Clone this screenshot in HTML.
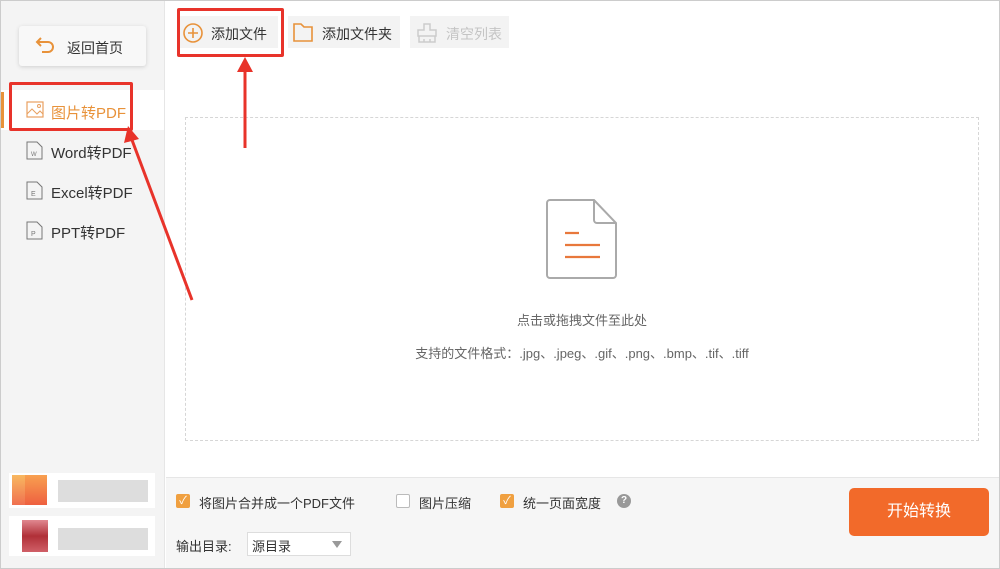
<!DOCTYPE html>
<html><head><meta charset="utf-8"><style>
*{margin:0;padding:0;box-sizing:border-box}
body{width:1000px;height:569px;position:relative;overflow:hidden;background:#fff;font-family:"Liberation Sans","Noto Sans CJK SC",sans-serif;font-size:14px;color:#333}
.abs{position:absolute}
</style></head><body>
<div class="abs" style="left:0;top:0;width:1000px;height:569px;border:1px solid #ccc"></div>
<div class="abs" style="left:1px;top:1px;width:164px;height:567px;background:#f4f4f4;border-right:1px solid #e6e6e6"></div>
<div class="abs" style="left:19px;top:26px;width:127px;height:40px;background:#f8f8f8;border-radius:3px;box-shadow:0 1px 4px rgba(0,0,0,.15)"></div>
<svg class="abs" style="left:35px;top:36px" width="22" height="20" viewBox="0 0 22 20"><path d="M6 2 L2 6 L6 10 M2 6 H13 a5 5 0 0 1 0 10 H7" fill="none" stroke="#e8923a" stroke-width="2"/></svg>
<div class="abs" style="left:67px;top:38px;font-size:14px">返回首页</div>
<div class="abs" style="left:1px;top:90px;width:163px;height:40px;background:#fff"></div>
<div class="abs" style="left:1px;top:92px;width:3px;height:36px;background:#e8923a"></div>
<svg class="abs" style="left:26px;top:101px" width="18" height="17"><rect x="1" y="1" width="16" height="15" fill="none" stroke="#e8a060" stroke-width="1.2"/><path d="M1 13 L6 8 L11 13 L14 10 L17 13" fill="none" stroke="#e8a060"/><circle cx="13" cy="5" r="1.5" fill="none" stroke="#e8a060"/></svg>
<div class="abs" style="left:51px;top:102px;color:#e8923a;font-size:15px">图片转PDF</div>
<svg class="abs" style="left:26px;top:141px" width="17" height="19"><path d="M1 1 H11 L16 6 V18 H1 Z" fill="none" stroke="#777"/><text x="5" y="15" font-size="6" fill="#777">W</text></svg>
<div class="abs" style="left:51px;top:142px;font-size:15px">Word转PDF</div>
<svg class="abs" style="left:26px;top:181px" width="17" height="19"><path d="M1 1 H11 L16 6 V18 H1 Z" fill="none" stroke="#777"/><text x="5" y="15" font-size="7" fill="#777">E</text></svg>
<div class="abs" style="left:51px;top:182px;font-size:15px">Excel转PDF</div>
<svg class="abs" style="left:26px;top:221px" width="17" height="19"><path d="M1 1 H11 L16 6 V18 H1 Z" fill="none" stroke="#777"/><text x="5" y="15" font-size="7" fill="#777">P</text></svg>
<div class="abs" style="left:51px;top:222px;font-size:15px">PPT转PDF</div>
<!-- blurred -->
<div class="abs" style="left:9px;top:473px;width:146px;height:35px;background:#fff"></div>
<div class="abs" style="left:12px;top:475px;width:13px;height:30px;background:linear-gradient(#f8b860,#f07050)"></div>
<div class="abs" style="left:25px;top:475px;width:22px;height:30px;background:linear-gradient(#f8a050,#ee6040)"></div>
<div class="abs" style="left:58px;top:480px;width:90px;height:22px;background:#ddd"></div>
<div class="abs" style="left:9px;top:516px;width:146px;height:40px;background:#fff"></div>
<div class="abs" style="left:22px;top:520px;width:26px;height:32px;background:linear-gradient(#e08890,#b03038,#d06068)"></div>
<div class="abs" style="left:58px;top:528px;width:90px;height:22px;background:#ddd"></div>
<!-- toolbar -->
<div class="abs" style="left:180px;top:16px;width:98px;height:32px;background:#f3f3f3"></div>
<svg class="abs" style="left:182px;top:22px" width="22" height="22"><circle cx="11" cy="11" r="9" fill="none" stroke="#e8923a" stroke-width="1.6"/><path d="M11 6V16M6 11H16" stroke="#e8923a" stroke-width="1.6"/></svg>
<div class="abs" style="left:211px;top:24px">添加文件</div>
<div class="abs" style="left:288px;top:16px;width:112px;height:32px;background:#f3f3f3"></div>
<svg class="abs" style="left:292px;top:21px" width="22" height="22"><path d="M2 3 H9 L12 6 H20 V20 H2 Z" fill="none" stroke="#e8923a" stroke-width="1.6"/></svg>
<div class="abs" style="left:322px;top:24px">添加文件夹</div>
<div class="abs" style="left:410px;top:16px;width:99px;height:32px;background:#f3f3f3"></div>
<svg class="abs" style="left:416px;top:22px" width="22" height="22"><path d="M8 2H14V8H20V14H2V8H8Z M3 14V20H19V14 M8 17V20 M14 17V20" fill="none" stroke="#ccc" stroke-width="1.5"/></svg>
<div class="abs" style="left:446px;top:24px;color:#c4c4c4">清空列表</div>
<!-- drop zone -->
<div class="abs" style="left:185px;top:117px;width:794px;height:324px;border:1px dashed #d6d6d6"></div>
<svg class="abs" style="left:545px;top:198px" width="74" height="82"><path d="M5 2 H49 L71 25 V77 a3 3 0 0 1 -3 3 H5 a3 3 0 0 1 -3 -3 V5 a3 3 0 0 1 3 -3Z M49 2 V22 a3 3 0 0 0 3 3 H71" fill="none" stroke="#aaa" stroke-width="2"/><path d="M20 35H34M20 47H55M20 59H55" stroke="#e8783c" stroke-width="2.2"/></svg>
<div class="abs" style="left:0;top:310px;width:1164px;text-align:center;font-size:13px;color:#666">点击或拖拽文件至此处</div>
<div class="abs" style="left:0;top:343px;width:1164px;text-align:center;font-size:13px;color:#666">支持的文件格式：.jpg、.jpeg、.gif、.png、.bmp、.tif、.tiff</div>
<!-- bottom -->
<div class="abs" style="left:166px;top:477px;width:833px;height:91px;background:#f6f6f6;border-top:1px solid #e6e6e6"></div>
<div class="abs" style="left:176px;top:494px;width:14px;height:14px;background:#f0a040;border-radius:2px;color:#fff;font-size:11px;text-align:center;line-height:14px">✓</div>
<div class="abs" style="left:199px;top:493px;font-size:13px">将图片合并成一个PDF文件</div>
<div class="abs" style="left:396px;top:494px;width:14px;height:14px;background:#fff;border:1px solid #bbb;border-radius:2px"></div>
<div class="abs" style="left:419px;top:493px;font-size:13px">图片压缩</div>
<div class="abs" style="left:500px;top:494px;width:14px;height:14px;background:#f0a040;border-radius:2px;color:#fff;font-size:11px;text-align:center;line-height:14px">✓</div>
<div class="abs" style="left:523px;top:493px;font-size:13px">统一页面宽度</div>
<div class="abs" style="left:617px;top:494px;width:14px;height:14px;background:#999;border-radius:50%;color:#fff;font-size:10px;text-align:center;line-height:14px;font-weight:bold">?</div>
<div class="abs" style="left:176px;top:536px;font-size:13px">输出目录:</div>
<div class="abs" style="left:247px;top:532px;width:104px;height:24px;background:#fff;border:1px solid #ddd"></div>
<div class="abs" style="left:252px;top:536px;font-size:13px">源目录</div>
<div class="abs" style="left:332px;top:541px;width:0;height:0;border-left:5px solid transparent;border-right:5px solid transparent;border-top:7px solid #999"></div>
<div class="abs" style="left:849px;top:488px;width:140px;height:48px;background:#f26a2a;border-radius:5px;color:#fff;font-size:16px;text-align:center;line-height:48px">开始转换</div>
<!-- annotations -->
<div class="abs" style="left:177px;top:8px;width:107px;height:49px;border:3px solid #e8332a;border-radius:2px"></div>
<div class="abs" style="left:9px;top:82px;width:124px;height:49px;border:3px solid #e8332a;border-radius:2px"></div>
<svg class="abs" style="left:0;top:0" width="300" height="310"><path d="M245 148 L245 70" stroke="#e8332a" stroke-width="3"/><path d="M237 72 L245 57 L253 72Z" fill="#e8332a"/><path d="M192 300 L132 140" stroke="#e8332a" stroke-width="3"/><path d="M124 143 L128 126 L139 139Z" fill="#e8332a"/></svg>
</body></html>
